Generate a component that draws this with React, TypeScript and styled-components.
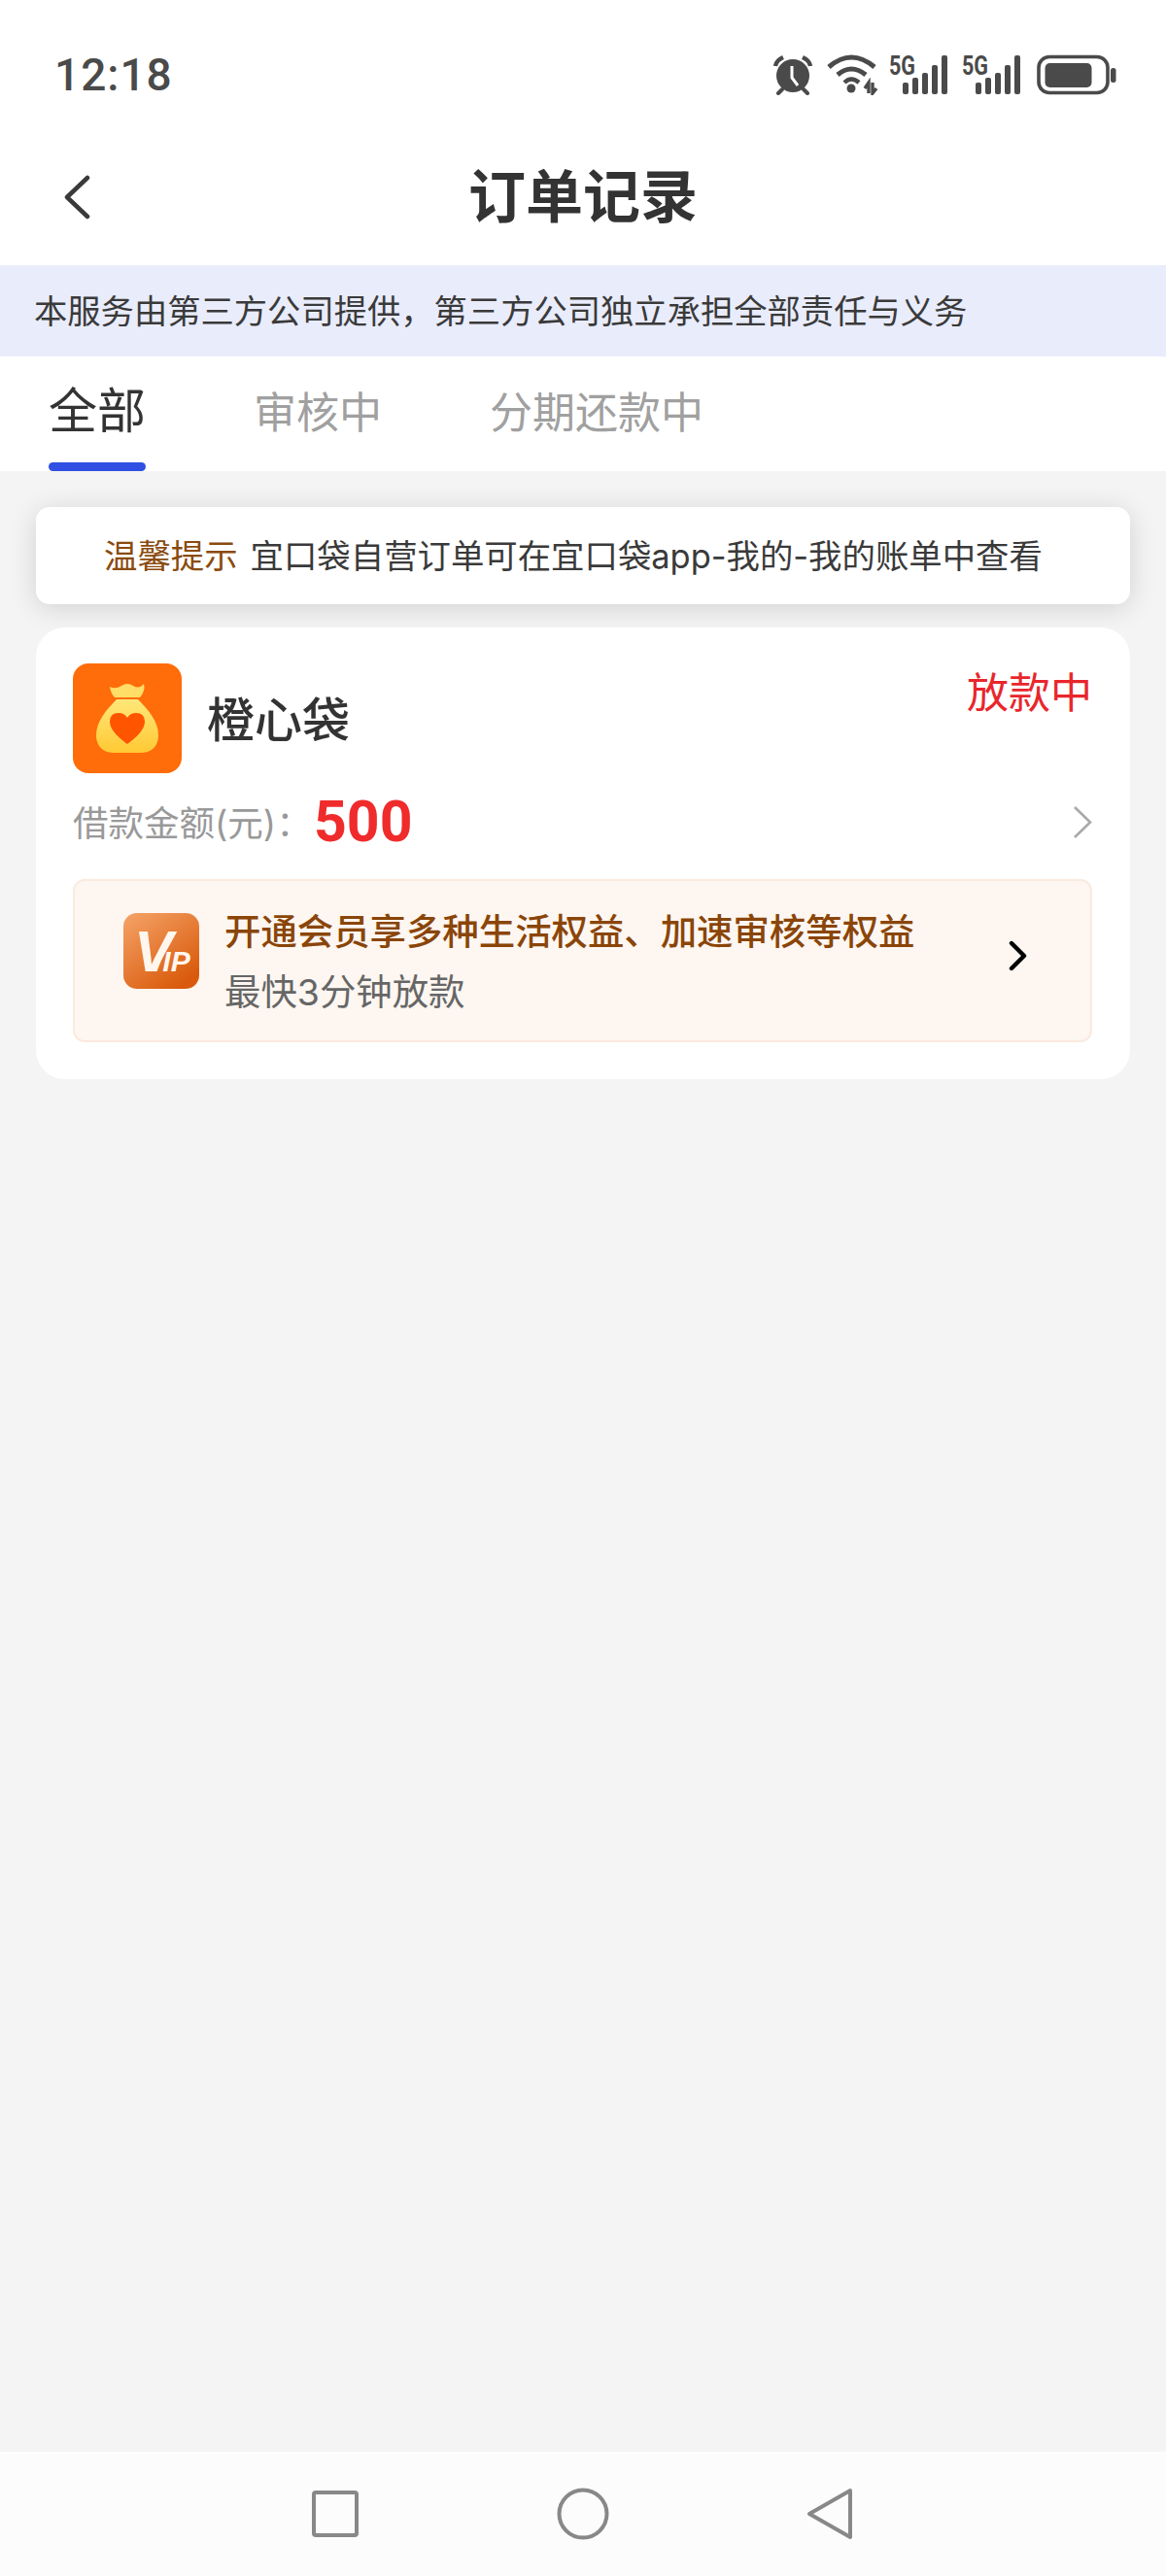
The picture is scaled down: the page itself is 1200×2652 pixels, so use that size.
import React from 'react'
import styled, { createGlobalStyle } from 'styled-components'

const CJK = `Inter, "Noto Sans CJK SC", "Noto Sans", sans-serif`

const GlobalStyle = createGlobalStyle`
  html, body {
    margin: 0;
    padding: 0;
    background: #f4f4f4;
  }
  * {
    box-sizing: border-box;
  }
`

const App = () => {
  return (
    <Page>
      <GlobalStyle />
      <StatusBar>
        <Time>12:18</Time>
        <StatusIcons>
          <AlarmIcon />
          <WifiIcon />
          <IconSlot $shift={-4}>
            <SignalIcon />
          </IconSlot>
          <SignalIcon />
          <IconSlot $shift={2}>
            <BatteryIcon />
          </IconSlot>
        </StatusIcons>
      </StatusBar>

      <NavBar>
        <BackButton>
          <svg width="28" height="46" viewBox="0 0 28 46" fill="none">
            <path d="M25 3 L4 23 L25 43" stroke="#3a3a3a" strokeWidth="4.5" strokeLinecap="round" strokeLinejoin="round" />
          </svg>
        </BackButton>
        <Title>订单记录</Title>
      </NavBar>

      <Banner>本服务由第三方公司提供，第三方公司独立承担全部责任与义务</Banner>

      <Tabs>
        <Tab $active>全部</Tab>
        <Tab>审核中</Tab>
        <Tab>分期还款中</Tab>
      </Tabs>

      <Content>
        <Notice>
          <NoticeLabel>温馨提示</NoticeLabel>
          <span>宜口袋自营订单可在宜口袋app-我的-我的账单中查看</span>
        </Notice>

        <OrderCard>
          <OrderHead>
            <ProductLogo />
            <ProductName>橙心袋</ProductName>
            <OrderStatus>放款中</OrderStatus>
          </OrderHead>

          <AmountRow>
            <AmountLabel>借款金额(元)：</AmountLabel>
            <AmountValue>500</AmountValue>
            <svg width="22" height="38" viewBox="0 0 22 38" fill="none">
              <path d="M4 5 L20 20.5 L4 36" stroke="#a8a8a8" strokeWidth="2.6" />
            </svg>
          </AmountRow>

          <VipBox>
            <VipBadge>
              <VipLogo />
            </VipBadge>
            <VipText>
              <VipTitle>开通会员享多种生活权益、加速审核等权益</VipTitle>
              <VipSub>最快3分钟放款</VipSub>
            </VipText>
            <VipArrow width="20" height="32" viewBox="0 0 20 32" fill="none">
              <path d="M3 3 L16 16 L3 29" stroke="#000" strokeWidth="4.4" strokeLinecap="round" strokeLinejoin="round" />
            </VipArrow>
          </VipBox>
        </OrderCard>
      </Content>

      <BottomBar>
        <svg width="50" height="50" viewBox="0 0 50 50" fill="none">
          <rect x="3" y="3" width="44" height="44" rx="2" stroke="#888" strokeWidth="4" />
        </svg>
        <svg width="54" height="54" viewBox="0 0 54 54" fill="none">
          <circle cx="27" cy="27" r="24.5" stroke="#888" strokeWidth="4" />
        </svg>
        <svg width="48" height="54" viewBox="0 0 48 54" fill="none">
          <path d="M45 3 L3 27 L45 51 Z" stroke="#888" strokeWidth="4" strokeLinejoin="round" />
        </svg>
      </BottomBar>
    </Page>
  )
}

const AlarmIcon = () => (
  <svg width="42" height="42" viewBox="0 0 42 42">
    <circle cx="21" cy="22" r="17" fill="#4a4a4a" />
    <path d="M3 12 Q4 6 11 3" stroke="#4a4a4a" strokeWidth="4.5" fill="none" />
    <path d="M39 12 Q38 6 31 3" stroke="#4a4a4a" strokeWidth="4.5" fill="none" />
    <path d="M10 36 L6 40 M32 36 L36 40" stroke="#4a4a4a" strokeWidth="4" strokeLinecap="round" />
    <path d="M20 12 L20 24 L26 32" stroke="#fff" strokeWidth="3" fill="none" />
  </svg>
)

const WifiIcon = () => (
  <svg width="54" height="42" viewBox="0 0 54 42" fill="none">
    <path d="M2 13 Q25 -7 49 13" stroke="#4a4a4a" strokeWidth="5" />
    <path d="M11 21 Q25 9 40 21" stroke="#4a4a4a" strokeWidth="5" />
    <path d="M18 29 Q25 22 33 29" stroke="#4a4a4a" strokeWidth="4.5" />
    <circle cx="25" cy="35" r="4.5" fill="#4a4a4a" />
    <path d="M39 35 L43 29 V40 M47 29 V40 L51 35" stroke="#4a4a4a" strokeWidth="3.4" />
  </svg>
)

const SignalIcon = () => (
  <svg width="61" height="52" viewBox="0 -5 61 52">
    <text x="0" y="21" fontFamily="Roboto, sans-serif" fontWeight="700" fontSize="28" fill="#4a4a4a" textLength="27" lengthAdjust="spacingAndGlyphs">5G</text>
    <rect x="14" y="29" width="6" height="12" rx="2" fill="#4a4a4a" />
    <rect x="24" y="24" width="6" height="17" rx="2" fill="#4a4a4a" />
    <rect x="34" y="19" width="6" height="22" rx="2" fill="#4a4a4a" />
    <rect x="44" y="11" width="6" height="30" rx="2" fill="#4a4a4a" />
    <rect x="54" y="1" width="6" height="40" rx="2" fill="#4a4a4a" />
  </svg>
)

const BatteryIcon = () => (
  <svg width="82" height="42" viewBox="0 0 82 42">
    <rect x="2" y="2.5" width="71" height="37" rx="11" fill="none" stroke="#4a4a4a" strokeWidth="3.6" />
    <rect x="8.5" y="9" width="48" height="25" rx="5" fill="#4a4a4a" />
    <rect x="76" y="14" width="5.5" height="15" rx="2.5" fill="#4a4a4a" />
  </svg>
)

const ProductLogo = () => (
  <svg width="112" height="113" viewBox="0 0 112 113">
    <defs>
      <linearGradient id="bagFill" x1="0" y1="0" x2="0" y2="1">
        <stop offset="0" stopColor="#ffe77a" />
        <stop offset="1" stopColor="#ffc933" />
      </linearGradient>
    </defs>
    <rect width="112" height="113" rx="16" fill="#ff6c0a" />
    <path d="M38 24 Q44 27 50 23 Q56 19 62 23 Q68 27 73 21 Q75 28 69 35 H43 Q39 31 38 24 Z" fill="#ffdd66" />
    <path d="M45 37 H67 C78 48 88 60 88 74 C88 86 80 92 70 92 H42 C32 92 24 86 24 74 C24 60 34 48 45 37 Z" fill="url(#bagFill)" />
    <path d="M56 83 Q38 70 38 60 Q38 51 47 51 Q53 51 56 56 Q59 51 65 51 Q74 51 74 60 Q74 70 56 83 Z" fill="#ff5500" />
  </svg>
)

const VipLogo = () => (
  <svg width="78" height="78" viewBox="0 0 78 78">
    <defs>
      <linearGradient id="vipFill" x1="0" y1="0" x2="0.7" y2="1">
        <stop offset="0" stopColor="#f5a468" />
        <stop offset="1" stopColor="#d95a0c" />
      </linearGradient>
    </defs>
    <rect width="78" height="78" rx="14" fill="url(#vipFill)" />
    <text x="11" y="60" fontFamily="'Liberation Sans', sans-serif" fontWeight="700" fontStyle="italic" fill="#fff6ee">
      <tspan fontSize="60">V</tspan>
      <tspan fontSize="30" dx="-19">/IP</tspan>
    </text>
  </svg>
)

const Page = styled.div`
  width: 1200px;
  height: 2652px;
  display: flex;
  flex-direction: column;
  background: #f4f4f4;
  font-family: ${CJK};
  overflow: hidden;
`

const StatusBar = styled.div`
  height: 132px;
  padding: 21px 51px 0 56px;
  display: flex;
  align-items: center;
  justify-content: space-between;
  background: #fff;
`

const Time = styled.div`
  font-family: Roboto, sans-serif;
  font-size: 46px;
  font-weight: 500;
  letter-spacing: 1px;
  color: #4a4a4a;
`

const StatusIcons = styled.div`
  display: flex;
  align-items: center;
  gap: 14px;
`

const IconSlot = styled.div<{ $shift: number }>`
  display: flex;
  margin-left: ${p => p.$shift}px;
`

const NavBar = styled.div`
  position: relative;
  height: 141px;
  display: flex;
  align-items: center;
  justify-content: center;
  background: #fff;
`

const BackButton = styled.div`
  position: absolute;
  left: 65px;
  top: 48px;
  display: flex;
`

const Title = styled.div`
  font-size: 59px;
  font-weight: 700;
  line-height: 70px;
  color: #333;
`

const Banner = styled.div`
  height: 94px;
  padding: 0 0 4px 35px;
  display: flex;
  align-items: center;
  background: #e9ecfb;
  font-size: 34.3px;
  color: #3a3a3a;
`

const Tabs = styled.div`
  height: 118px;
  padding: 0 0 0 50px;
  display: flex;
  gap: 111px;
  background: #fff;
`

const Tab = styled.div<{ $active?: boolean }>`
  position: relative;
  height: 118px;
  padding-top: ${p => (p.$active ? '20px' : '22px')};
  font-size: ${p => (p.$active ? '50px' : '44px')};
  line-height: 72px;
  color: ${p => (p.$active ? '#333' : '#a0a0a0')};

  &::after {
    content: '';
    display: ${p => (p.$active ? 'block' : 'none')};
    position: absolute;
    left: 0;
    right: 0;
    bottom: 0;
    height: 9px;
    border-radius: 5px;
    background: #2f50e2;
  }
`

const Content = styled.div`
  flex: 1;
  padding: 37px 37px 0;
  display: flex;
  flex-direction: column;
  gap: 24px;
`

const Notice = styled.div`
  height: 100px;
  padding: 0 0 4px 70px;
  display: flex;
  align-items: center;
  gap: 13px;
  background: #fff;
  border-radius: 14px;
  box-shadow: 0 4px 28px rgba(0, 0, 0, 0.14);
  font-size: 34.4px;
  color: #3a3a3a;
`

const NoticeLabel = styled.span`
  color: #8a4b0f;
`

const OrderCard = styled.div`
  position: relative;
  height: 465px;
  padding: 37px 39px 0 38px;
  background: #fff;
  border-radius: 30px;
`

const OrderHead = styled.div`
  display: flex;
  align-items: center;
  gap: 26px;
`

const ProductName = styled.div`
  padding-bottom: 4px;
  font-size: 49px;
  font-weight: 500;
  color: #333;
`

const OrderStatus = styled.div`
  margin-left: auto;
  align-self: flex-start;
  padding-top: 2px;
  font-size: 43px;
  line-height: 56px;
  color: #e8262c;
`

const AmountRow = styled.div`
  height: 76px;
  margin-top: 11px;
  display: flex;
  align-items: center;
`

const AmountLabel = styled.div`
  width: 248px;
  font-size: 36.5px;
  color: #999;
`

const AmountValue = styled.div`
  flex: 1;
  font-family: Roboto, sans-serif;
  font-size: 59px;
  font-weight: 700;
  color: #f02b2b;
`

const VipBox = styled.div`
  height: 168px;
  margin-top: 22px;
  padding: 0 64px 0 50px;
  display: flex;
  align-items: center;
  gap: 26px;
  background: #fdf6f1;
  border: 2px solid #fbeade;
  border-radius: 12px;
`

const VipBadge = styled.div`
  display: flex;
  align-self: flex-start;
  margin-top: 33px;
`

const VipText = styled.div`
  flex: 1;
  margin-top: 4px;
  display: flex;
  flex-direction: column;
  gap: 10px;
`

const VipTitle = styled.div`
  font-size: 37.4px;
  font-weight: 500;
  line-height: 52px;
  color: #8a4508;
`

const VipSub = styled.div`
  font-size: 37.4px;
  line-height: 52px;
  color: #666;
`

const VipArrow = styled.svg`
  margin-bottom: 10px;
`

const BottomBar = styled.div`
  height: 128px;
  padding: 0 322px 0 320px;
  display: flex;
  align-items: center;
  justify-content: space-between;
  background: #fcfcfc;
`

export default App
